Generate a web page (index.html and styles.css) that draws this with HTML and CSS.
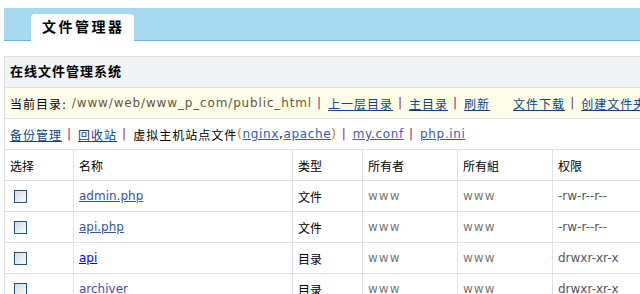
FILE: index.html
```html
<!DOCTYPE html>
<html lang="zh-CN">
<head>
    <meta charset="UTF-8">
    <meta name="viewport" content="width=device-width, initial-scale=1.0">
    <title>文件管理器</title>
    <link rel="stylesheet" href="styles.css">
</head>
<body>
    <div class="topbar">
        <div class="tab">文件管理器</div>
    </div>

    <div class="panel">
        <div class="panel-title">在线文件管理系统</div>

        <div class="pathbar">
            <span>当前目录:&nbsp;</span>
            <span class="path">/www/web/www_p_com/public_html</span>
            <span class="sep">|</span>
            <a href="#">上一层目录</a>
            <span class="sep">|</span>
            <a href="#">主目录</a>
            <span class="sep">|</span>
            <a href="#">刷新</a>
            <a href="#" class="gap">文件下载</a>
            <span class="sep">|</span>
            <a href="#">创建文件夹</a>
        </div>

        <div class="toolbar">
            <a href="#">备份管理</a>
            <span class="sep">|</span>
            <a href="#">回收站</a>
            <span class="sep">|</span>
            <span>虚拟主机站点文件</span>
            <span class="paren">(</span>
            <a href="#" class="light">nginx</a>
            <span class="comma">,</span>
            <a href="#" class="light">apache</a>
            <span class="paren">)</span>
            <span class="sep">|</span>
            <a href="#" class="visited">my.conf</a>
            <span class="sep">|</span>
            <a href="#" class="visited">php.ini</a>
        </div>

        <table class="files">
            <colgroup>
                <col style="width: 69px">
                <col style="width: 219px">
                <col style="width: 70px">
                <col style="width: 95px">
                <col style="width: 95px">
                <col>
            </colgroup>
            <thead>
                <tr>
                    <th>选择</th>
                    <th>名称</th>
                    <th>类型</th>
                    <th>所有者</th>
                    <th>所有組</th>
                    <th>权限</th>
                </tr>
            </thead>
            <tbody>
                <tr>
                    <td><input type="checkbox" class="check"></td>
                    <td><a href="#" class="file">admin.php</a></td>
                    <td>文件</td>
                    <td class="owner">www</td>
                    <td class="owner">www</td>
                    <td class="perm">-rw-r--r--</td>
                </tr>
                <tr>
                    <td><input type="checkbox" class="check"></td>
                    <td><a href="#" class="file">api.php</a></td>
                    <td>文件</td>
                    <td class="owner">www</td>
                    <td class="owner">www</td>
                    <td class="perm">-rw-r--r--</td>
                </tr>
                <tr>
                    <td><input type="checkbox" class="check"></td>
                    <td><a href="#" class="dir">api</a></td>
                    <td>目录</td>
                    <td class="owner">www</td>
                    <td class="owner">www</td>
                    <td class="perm">drwxr-xr-x</td>
                </tr>
                <tr>
                    <td><input type="checkbox" class="check"></td>
                    <td><a href="#" class="dir2">archiver</a></td>
                    <td>目录</td>
                    <td class="owner">www</td>
                    <td class="owner">www</td>
                    <td class="perm">drwxr-xr-x</td>
                </tr>
            </tbody>
        </table>
    </div>
</body>
</html>
```

FILE: styles.css
```css
body { margin: 8px 0 0 4px; font-family: "DejaVu Sans", "Noto Sans CJK SC", sans-serif; font-size: 12px; color: #000; background: #fff; overflow: hidden; }
a { color: #0b4488; text-decoration: underline; }

.topbar { display: flex; align-items: flex-end; width: 800px; height: 32px; background: #a6d8ee; border-bottom: 1px solid #68b4e2; }
.tab { height: 27px; line-height: 27px; margin: 0 0 -1px 27px; padding: 0 9px 0 11px; background: #fff; border-radius: 4px 4px 0 0; font-size: 14px; font-weight: bold; letter-spacing: 2.5px; }

.panel { width: 800px; margin-top: 15px; border: 1px solid #dde1e8; border-right: none; }
.panel-title { height: 30px; line-height: 30px; padding-left: 5px; background: #f2f3f6; border-bottom: 1px solid #dde1e8; font-size: 13px; font-weight: bold; letter-spacing: 1px; }
.pathbar, .toolbar { display: flex; align-items: center; height: 30px; padding-left: 5px; border-bottom: 1px solid #dde1e8; letter-spacing: 1px; white-space: nowrap; overflow: hidden; }
.pathbar { background: #fefee9; }
.path { color: #66553f; letter-spacing: 0.85px; }
.sep { color: #8a1c70; margin: 0 7px 0 5px; letter-spacing: 0; }
.gap { margin-left: 23px; }
.paren { color: #e07000; letter-spacing: 0.65px; }
.comma { letter-spacing: 0.65px; }
.light { color: #2c5db4; letter-spacing: 0.65px; }
.visited { color: #4c58a8; letter-spacing: 0.65px; }

.files { width: 100%; table-layout: fixed; border-collapse: separate; border-spacing: 0; }
.files th, .files td { height: 31px; padding: 0 5px; border-right: 1px solid #dde1e8; border-bottom: 1px solid #dde1e8; text-align: left; font-weight: normal; white-space: nowrap; box-sizing: border-box; }
.check { appearance: none; display: block; width: 13px; height: 13px; margin: 1px 0 0 4px; border: 1px solid #1d5686; background: linear-gradient(135deg, #d9d9d9, #fbfbfb); }
.file { color: #3555a6; }
.dir { color: #0000ee; }
.dir2 { color: #4646c4; }
.owner { color: #777; letter-spacing: 1px; }
.perm { color: #555; }
```
